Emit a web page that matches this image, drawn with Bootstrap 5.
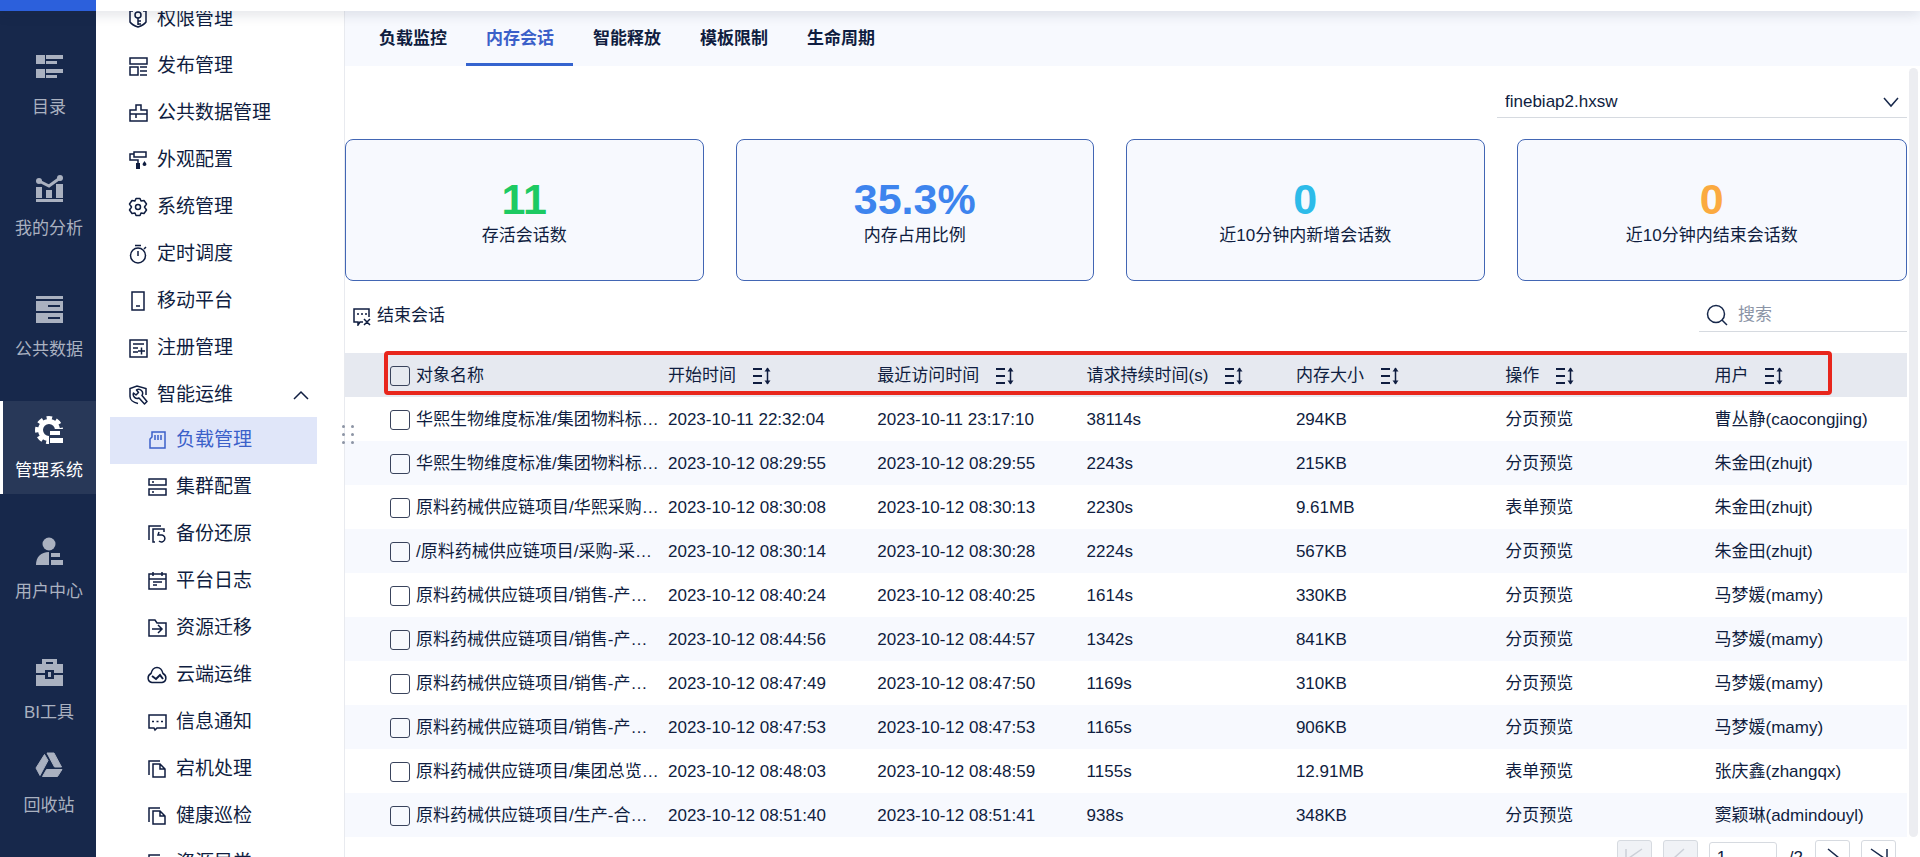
<!DOCTYPE html>
<html lang="zh-CN">
<head>
<meta charset="utf-8">
<meta name="viewport" content="width=device-width, initial-scale=1">
<title>内存会话</title>
<link href="https://cdn.jsdelivr.net/npm/bootstrap@5.3.0/dist/css/bootstrap.min.css" rel="stylesheet">
<style>
body{font-family:"Liberation Sans","Noto Sans CJK SC",sans-serif;font-size:17px;line-height:24px;color:#0f1d40;font-weight:400}
a{color:inherit;text-decoration:none}
svg{display:block;flex:none}
.brand-strip{width:96px;background:#2c60dc}
.top-strip{height:11px;z-index:3;box-shadow:0 2px 14px rgba(20,30,60,.16)}
.rail{width:96px;background:#17284b;color:#aab1c0;padding-top:27px;gap:28px}
.rail a{height:93px;padding-top:15px;gap:15px;border-left:3px solid transparent;border-right:1px solid transparent}
.rail a.current{background:#283858;color:#fff;border-left-color:#fff}
.rail a:last-child{margin-top:-28px}
.side{width:249px;border-right:1px solid #e8eaef}
.side-list{margin:-17px 27px 0 14px;font-size:19px}
.side-list a{height:47px;padding:3px 0 0 18px;gap:9px}
.side-list .sub{padding:0 0 0 37px}
.side-list a.current{background:#e0e6f9;color:#3b60c9}
.side-icon{width:20px;height:20px;fill:none;stroke:currentColor;stroke-width:1.5}
.drag-grip{left:342px;top:425px;width:12px;z-index:2;row-gap:5px;column-gap:6px}
.drag-grip i{width:3px;height:3px;background:#8d95a5;border-radius:50%}
.tab-strip{height:55px;background:#f7f9fe;padding-left:14px}
.tab-strip a{padding:16px 19px 0 20px;font-weight:700;border-bottom:3px solid transparent}
.tab-strip a.current{color:#3b60c9;border-color:#3564cf}
.pane{padding-right:13px}
.line-field{border:0;border-bottom:1px solid #d6dae0;border-radius:0;background-color:transparent;color:inherit}
.node-box{width:410px;margin-top:20px}
.node-box select{width:100%;height:32px;padding:2px 8px 0;appearance:none;outline:0}
.node-box svg{right:8px;top:10px;pointer-events:none}
.stat-row{margin-top:21px}
.stat{height:142px;padding-top:3px;border:1px solid #4266b4;border-radius:8px;background:#f7f9fe}
.stat strong{font-size:43px;line-height:50px;font-weight:700}
.stat-cell{padding-right:32px}
.stat-cell:last-child{padding-right:0}
.action-row{height:72px;padding:18px 0 0 7px}
.action-row button{border:0;background:none;padding:2px 0 0;color:inherit;height:32px;gap:5px}
.search-box{width:208px;height:33px;padding-left:7px;gap:10px}
.search-box input{min-width:0;background:none;outline:0}
.search-box input::placeholder{color:#8b94a6;opacity:1}
.sessions{table-layout:fixed;width:100%}
.sessions th,.sessions td{height:44px;padding:2px 0 0;font-weight:400;white-space:nowrap}
.sessions thead{background:#e6e9f0}
.sessions tbody tr:nth-child(even){background:#f7f9fe}
.sessions .name-col{width:323px}
.sessions .data-col{width:13.4%}
.sessions .name-cell{padding-left:45px}
.tick{appearance:none;width:20px;height:20px;border:1px solid #39435c;border-radius:3px;background:transparent;margin:0}
.sort-button{border:0;background:none;padding:0;color:inherit}
.header-mark{left:39px;right:75px;top:-2px;height:44px;border:4px solid #e8261c;border-radius:4px;pointer-events:none}
.pages{padding:3px 11px 0 0;gap:11px}
.pages button{width:35px;height:36px;border:1px solid #d6dae0;border-radius:3px;background:#fff;color:#17284b;padding:0}
.pages button:disabled{background:#f0f2f6;color:#ccd0d8}
.pages input{width:68px;height:32px;border:1px solid #d6dae0;border-radius:3px;padding:0 7px;color:inherit}
.pages span{padding:0 1px}
.scroll-thumb{right:2px;top:57px;bottom:20px;width:9px;border-radius:5px;background:#ecedf1}
</style>
</head>
<body>
<svg width="0" height="0" class="position-absolute" aria-hidden="true">
<symbol id="sort" viewBox="0 0 20 20"><path d="M1 3h9M1 10h9M1 17h9" fill="none" stroke="currentColor" stroke-width="2"/><path d="M15.500 2v16" stroke="currentColor" stroke-width="1.500"/><path d="M12.500 5.500l3-4 3 4zM12.500 14.500l3 4 3-4z" fill="currentColor"/></symbol>
<symbol id="copy" viewBox="0 0 20 20"><path d="M2 16V2h11M6 5h7l5 5v8H6zM13 5v5h5"/></symbol>
</svg>
<div class="vh-100 d-flex flex-column overflow-hidden">
<header class="top-strip bg-white d-flex position-relative"><div class="brand-strip"></div></header>
<div class="d-flex flex-grow-1 position-relative" style="min-height:0">
<nav class="rail d-flex flex-column flex-shrink-0 text-center" aria-label="主导航">
<a href="#" class="d-flex flex-column align-items-center"><svg width="28" height="28" fill="currentColor"><path d="M1 2h9v9H1zM11 2h17v4H11zM11 8h11v3H11zM1 16h9v9H1zM11 16h17v4H11zM11 22h11v3H11z"/></svg>目录</a>
<a href="#" class="d-flex flex-column align-items-center"><svg width="28" height="28" fill="currentColor"><path d="M1 13h6v11H1zM11 16h6v8h-6zM21 10h7v14h-7zM1 25h27v3H1z"/><path d="M4 7l10 5 11-8" fill="none" stroke="currentColor" stroke-width="3"/><circle cx="4" cy="7" r="3"/><circle cx="25" cy="4" r="3"/></svg>我的分析</a>
<a href="#" class="d-flex flex-column align-items-center"><svg width="28" height="28" fill="currentColor"><path fill-rule="evenodd" d="M1 1h27v3H1zM1 6h27v10H1zm12 4v2h12v-2zM1 18h27v10H1zm12 4v2h12v-2z"/></svg>公共数据</a>
<a href="#" class="current d-flex flex-column align-items-center"><svg width="28" height="28" fill="none" stroke="currentColor"><circle cx="14" cy="14" r="8.500" stroke-width="5"/><circle cx="14" cy="14" r="12" stroke-width="4" stroke-dasharray="5.400 4.025" stroke-dashoffset="2.700"/><path d="M14 13h14v15H14z" fill="#283858" stroke="none"/><path d="M15 15h10v4H15zM15 22h13v5H15z" fill="currentColor" stroke="none"/></svg>管理系统</a>
<a href="#" class="d-flex flex-column align-items-center"><svg width="28" height="28" fill="currentColor"><circle cx="14" cy="7" r="6.500"/><path d="M14 15v13H1c0-8 5-13 13-13zM16 16h9v4h-9zM16 23h12v5H16z"/></svg>用户中心</a>
<a href="#" class="d-flex flex-column align-items-center"><svg width="28" height="28" fill="currentColor"><path fill-rule="evenodd" d="M7 1h15v5h6v9h-9v-3h-9v3H1V6h6zm4 3v2h7V4zM1 17h9v4h9v-4h9v11H1zM13 14h3v5h-3z"/></svg>BI工具</a>
<a href="#" class="d-flex flex-column align-items-center"><svg width="28" height="28" fill="currentColor" stroke="currentColor" stroke-linejoin="round"><path d="M9.500 3.500l3.500 6-8 15-4-7.500zM12 2h7l7.500 14h-7zM11.500 18.500h15.500l-4.500 7H7.500z"/></svg>回收站</a>
</nav>
<nav class="side overflow-hidden flex-shrink-0" aria-label="管理系统">
<div class="side-list d-flex flex-column">
<a href="#" class="d-flex align-items-center"><svg class="side-icon" viewBox="0 0 20 20"><path d="M5 2H2v11c2 3 5 4 8 5 3-1 6-2 8-5V2h-3"/><circle cx="10" cy="6" r="3"/><path d="M10 9v7M10 12h3M10 15h3"/></svg>权限管理</a>
<a href="#" class="d-flex align-items-center"><svg class="side-icon" viewBox="0 0 20 20"><path d="M2 2h17v6H2zM2 11h8v8H2zM12 11h7M12 15h7M12 19h7"/></svg>发布管理</a>
<a href="#" class="d-flex align-items-center"><svg class="side-icon" viewBox="0 0 20 20"><path d="M2 18V7h6V2h5v5h6v11zM2 11h17M8 11v4"/></svg>公共数据管理</a>
<a href="#" class="d-flex align-items-center"><svg class="side-icon" viewBox="0 0 20 20"><path d="M6 2h12v5H6zM6 4H2v6h8v3"/><path d="M8 13h4v6H8zM16.500 11l2 3a2 2 0 1 1-4 0z" fill="currentColor" stroke="none"/></svg>外观配置</a>
<a href="#" class="d-flex align-items-center"><svg class="side-icon" viewBox="0 0 20 20"><path d="M8 1.500h4l1 2.500 3-.5 2.500 3.500-2 3 2 3-2.500 3.500-3-.5-1 2.500H8L7 16l-3 .5L1.500 13l2-3-2-3L4 3.500 7 4z" stroke-linejoin="round"/><circle cx="10" cy="10" r="2.500"/></svg>系统管理</a>
<a href="#" class="d-flex align-items-center"><svg class="side-icon" viewBox="0 0 20 20"><circle cx="10" cy="11.500" r="7.500"/><path d="M7 1.500h6M10 7v5M16 5l2-2"/></svg>定时调度</a>
<a href="#" class="d-flex align-items-center"><svg class="side-icon" viewBox="0 0 20 20"><path d="M4 1h12v18H4zM8 15h4"/></svg>移动平台</a>
<a href="#" class="d-flex align-items-center"><svg class="side-icon" viewBox="0 0 20 20"><path d="M2 2h17v17H2zM5 6h11M5 10h5M5 14h5M10 13h7M13.500 9.500v7"/></svg>注册管理</a>
<a href="#" class="d-flex align-items-center" aria-expanded="true"><svg class="side-icon" viewBox="0 0 20 20"><path d="M10 18.500c-5-1-8-4-8-7V3.500l7-2.500 9 2.500V10"/><path d="M8.500 5a4 4 0 0 1 5.500 5.500l5 6-2.500 2.500-5.500-6A4 4 0 0 1 5.500 8L8 10l2.500-2.500z" stroke-linejoin="round"/></svg>智能运维<svg class="ms-auto me-2" width="16" height="10" fill="none" stroke="currentColor" stroke-width="1.500"><path d="M1 9l7-7 7 7"/></svg></a>
<a href="#" class="sub current d-flex align-items-center"><svg class="side-icon" viewBox="0 0 20 20"><path d="M5 2h13v16H3V9l2-2zM8 5v5M11 5v5M14 5v5"/></svg>负载管理</a>
<a href="#" class="sub d-flex align-items-center"><svg class="side-icon" viewBox="0 0 20 20"><path d="M2 2h17v6H2zM2 12h17v6H2zM5 5h2M5 15h2"/></svg>集群配置</a>
<a href="#" class="sub d-flex align-items-center"><svg class="side-icon" viewBox="0 0 20 20"><path d="M2 16V2h12M8 18H6V5h11v3M12 8l-1 3h4a3.500 3.500 0 1 1-3 6"/></svg>备份还原</a>
<a href="#" class="sub d-flex align-items-center"><svg class="side-icon" viewBox="0 0 20 20"><path d="M2 3h17v15H2zM2 8h17M6 1v4M15 1v4M6 11h9M6 14h4"/></svg>平台日志</a>
<a href="#" class="sub d-flex align-items-center"><svg class="side-icon" viewBox="0 0 20 20"><path d="M2 18V2h6l2 3h9v13zM5 11h10M11 7l4 4-4 4"/></svg>资源迁移</a>
<a href="#" class="sub d-flex align-items-center"><svg class="side-icon" viewBox="0 0 20 20"><path d="M5 17.500c-5-1-5-7-1-9 2-8 10-8 12 0 4 2 4 8-1 9z"/><path d="M5 11l4 3 4-4 3 4" stroke-width="2"/></svg>云端运维</a>
<a href="#" class="sub d-flex align-items-center"><svg class="side-icon" viewBox="0 0 20 20"><path d="M2 3h17v13h-9l-2 2-1-2H2zM5 9.500h2M9.500 9.500h2M14 9.500h2"/></svg>信息通知</a>
<a href="#" class="sub d-flex align-items-center"><svg class="side-icon"><use href="#copy"/></svg>宕机处理</a>
<a href="#" class="sub d-flex align-items-center"><svg class="side-icon"><use href="#copy"/></svg>健康巡检</a>
<a href="#" class="sub d-flex align-items-center"><svg class="side-icon"><use href="#copy"/></svg>资源异常</a>
</div>
</nav>
<main class="flex-grow-1" style="min-width:0">
<nav class="tab-strip d-flex" aria-label="会话"><a href="#">负载监控</a><a href="#" class="current">内存会话</a><a href="#">智能释放</a><a href="#">模板限制</a><a href="#">生命周期</a></nav>
<div class="pane">
<div class="d-flex justify-content-end"><div class="node-box position-relative"><select class="line-field" aria-label="节点"><option>finebiap2.hxsw</option></select><svg class="position-absolute" width="16" height="12" fill="none" stroke="#17284b" stroke-width="1.500"><path d="M1 2l7 8 7-8"/></svg></div></div>
<div class="row g-0 stat-row">
<div class="col-3 stat-cell"><div class="stat d-flex flex-column align-items-center justify-content-center"><strong style="color:#1dca62">11</strong><span>存活会话数</span></div></div>
<div class="col-3 stat-cell"><div class="stat d-flex flex-column align-items-center justify-content-center"><strong style="color:#3d84ee">35.3%</strong><span>内存占用比例</span></div></div>
<div class="col-3 stat-cell"><div class="stat d-flex flex-column align-items-center justify-content-center"><strong style="color:#2dbbe9">0</strong><span>近10分钟内新增会话数</span></div></div>
<div class="col-3 stat-cell"><div class="stat d-flex flex-column align-items-center justify-content-center"><strong style="color:#fbaa40">0</strong><span>近10分钟内结束会话数</span></div></div>
</div>
<div class="action-row d-flex justify-content-between align-items-start">
<button class="d-flex align-items-center"><svg width="20" height="20" fill="none" stroke="currentColor" stroke-width="1.500"><path d="M11 16H8l-2 3v-3H2V3h15v8M5 8h2M9 8h2M13 8h2M12 13l6 6M18 13l-6 6"/></svg>结束会话</button>
<label class="search-box line-field d-flex align-items-center"><svg width="22" height="22" fill="none" stroke="#17284b" stroke-width="1.500"><circle cx="10" cy="10" r="8.500"/><path d="M16 16l5 5"/></svg><input class="border-0 p-0 w-100" type="search" placeholder="搜索" aria-label="搜索"></label>
</div>
<div class="position-relative">
<table class="sessions">
<colgroup><col class="name-col"><col class="data-col"><col class="data-col"><col class="data-col"><col class="data-col"><col class="data-col"><col></colgroup>
<thead><tr id="heads"></tr></thead>
<tbody id="rows"></tbody>
</table>
<div class="header-mark position-absolute"></div>
</div>
<div class="pages d-flex justify-content-end align-items-center">
<button disabled aria-label="首页"><svg class="m-auto" width="20" height="20" fill="none" stroke="currentColor" stroke-width="1.500"><path d="M2 1v18M18 1L5 10l13 9"/></svg></button>
<button disabled aria-label="上一页"><svg class="m-auto" width="20" height="20" fill="none" stroke="currentColor" stroke-width="1.500"><path d="M14 1L4 10l10 9"/></svg></button>
<input type="text" value="1" aria-label="页码"><span>/2</span>
<button aria-label="下一页"><svg class="m-auto" width="20" height="20" fill="none" stroke="currentColor" stroke-width="1.500"><path d="M5 1l11 9-11 9"/></svg></button>
<button aria-label="末页"><svg class="m-auto" width="20" height="20" fill="none" stroke="currentColor" stroke-width="1.500"><path d="M18 1v18M2 1l13 9-13 9"/></svg></button>
</div>
</div>
</main>
<div class="scroll-thumb position-absolute"></div>
</div>
<div class="drag-grip position-absolute d-flex flex-wrap"><i></i><i></i><i></i><i></i><i></i><i></i></div>
</div>
<script>
const heads = ["对象名称", "开始时间", "最近访问时间", "请求持续时间(s)", "内存大小", "操作", "用户"];
const rows = [
 ["华熙生物维度标准/集团物料标…", "2023-10-11 22:32:04", "2023-10-11 23:17:10", "38114s", "294KB", "分页预览", "曹丛静(caocongjing)"],
 ["华熙生物维度标准/集团物料标…", "2023-10-12 08:29:55", "2023-10-12 08:29:55", "2243s", "215KB", "分页预览", "朱金田(zhujt)"],
 ["原料药械供应链项目/华熙采购…", "2023-10-12 08:30:08", "2023-10-12 08:30:13", "2230s", "9.61MB", "表单预览", "朱金田(zhujt)"],
 ["/原料药械供应链项目/采购-采…", "2023-10-12 08:30:14", "2023-10-12 08:30:28", "2224s", "567KB", "分页预览", "朱金田(zhujt)"],
 ["原料药械供应链项目/销售-产…", "2023-10-12 08:40:24", "2023-10-12 08:40:25", "1614s", "330KB", "分页预览", "马梦媛(mamy)"],
 ["原料药械供应链项目/销售-产…", "2023-10-12 08:44:56", "2023-10-12 08:44:57", "1342s", "841KB", "分页预览", "马梦媛(mamy)"],
 ["原料药械供应链项目/销售-产…", "2023-10-12 08:47:49", "2023-10-12 08:47:50", "1169s", "310KB", "分页预览", "马梦媛(mamy)"],
 ["原料药械供应链项目/销售-产…", "2023-10-12 08:47:53", "2023-10-12 08:47:53", "1165s", "906KB", "分页预览", "马梦媛(mamy)"],
 ["原料药械供应链项目/集团总览…", "2023-10-12 08:48:03", "2023-10-12 08:48:59", "1155s", "12.91MB", "表单预览", "张庆鑫(zhangqx)"],
 ["原料药械供应链项目/生产-合…", "2023-10-12 08:51:40", "2023-10-12 08:51:41", "938s", "348KB", "分页预览", "窦颖琳(admindouyl)"]
];
const nameCell = (text, id) => `<label class="d-flex align-items-center" style="gap:6px" for="${id}"><input class="tick" type="checkbox" id="${id}">${text}</label>`;
document.getElementById("heads").innerHTML = heads.map((h, i) => i === 0
  ? `<th scope="col" class="name-cell">${nameCell(h, "all")}</th>`
  : `<th scope="col"><span class="d-flex align-items-center gap-3">${h}<button class="sort-button" aria-label="${h}排序"><svg width="20" height="20"><use href="#sort"/></svg></button></span></th>`).join("");
document.getElementById("rows").innerHTML = rows.map((r, n) =>
  `<tr><td class="name-cell">${nameCell(r[0], "row" + n)}</td>${r.slice(1).map(c => `<td>${c}</td>`).join("")}</tr>`).join("");
</script>
<script src="https://cdn.jsdelivr.net/npm/bootstrap@5.3.0/dist/js/bootstrap.bundle.min.js"></script>
</body>
</html>
